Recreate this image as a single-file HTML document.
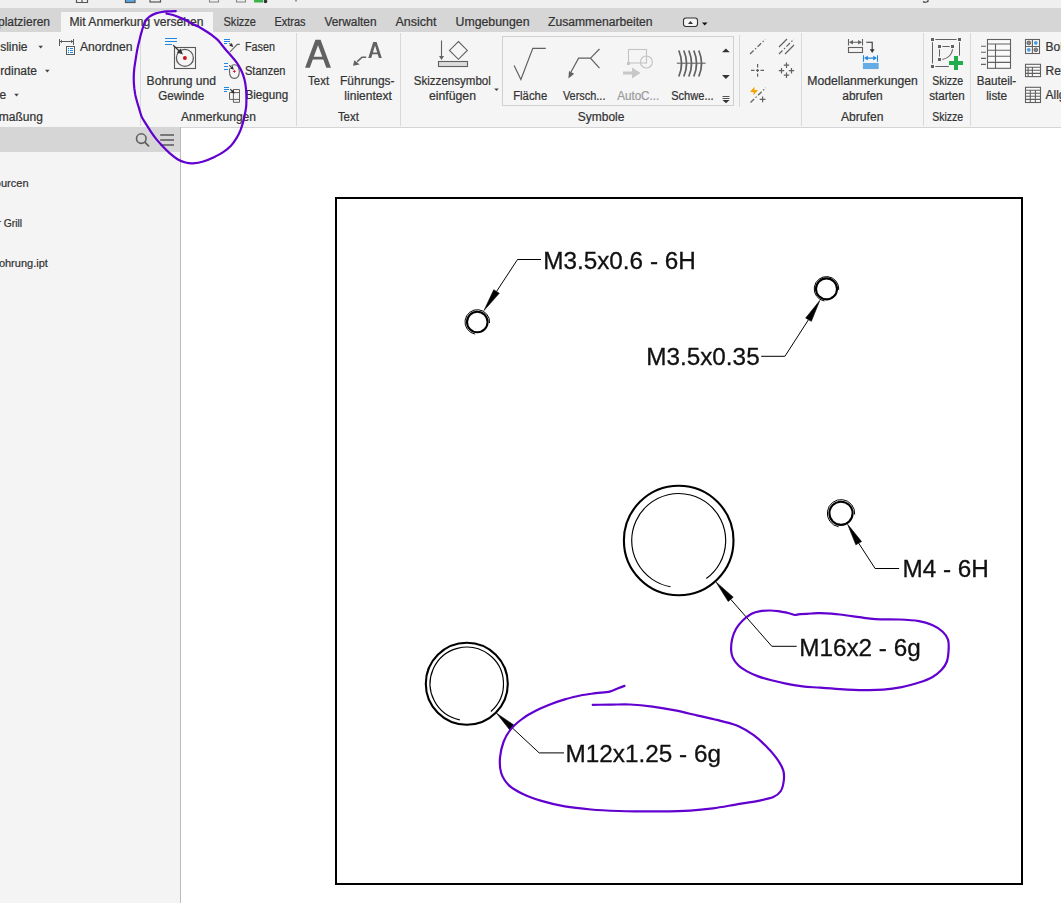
<!DOCTYPE html>
<html><head><meta charset="utf-8"><style>
html,body{margin:0;padding:0;}
body{width:1061px;height:903px;overflow:hidden;background:#fff;font-family:"Liberation Sans",sans-serif;}
svg{display:block;font-family:"Liberation Sans",sans-serif;}
</style></head><body>
<svg width="1061" height="903" viewBox="0 0 1061 903">
<rect x="0" y="0" width="1061" height="8" fill="#efefef"/>
<rect x="0" y="8" width="1061" height="24" fill="#d6d6d6"/>
<rect x="61" y="12" width="152" height="20" fill="#f5f5f5"/>
<rect x="0" y="32" width="1061" height="95" fill="#f5f5f5"/>
<rect x="181" y="127" width="880" height="1" fill="#d5d5d5"/>
<rect x="181" y="128" width="880" height="775" fill="#ffffff"/>
<rect x="0" y="127" width="180" height="25" fill="#d6d6d6"/>
<rect x="0" y="152" width="180" height="751" fill="#f4f4f4"/>
<rect x="180" y="127" width="1" height="776" fill="#bcbcbc"/>
<g fill="none" stroke="#555" stroke-width="1.2">
<path d="M76.5 -2 V2.5 H87.5 V-2 M82 -2 V2.5"/>
<rect x="125.5" y="-4" width="9.5" height="6.5" fill="#5aa7e8"/>
<rect x="150" y="-4" width="10.5" height="6" />
</g>
<g fill="none" stroke="#8a8a8a" stroke-width="1.1">
<rect x="209.5" y="-4" width="9" height="6"/><rect x="236.5" y="-4" width="9" height="6"/>
</g>
<rect x="254" y="-2" width="9" height="4.5" fill="#3bb54a"/>
<circle cx="265.5" cy="1.5" r="1.8" fill="#333"/>
<rect x="295" y="0" width="2" height="1.5" fill="#999"/>
<path d="M923 1.5 Q925 3 928 1.5 V-2" fill="none" stroke="#333" stroke-width="1.1"/>
<text x="50" y="26" font-size="12" text-anchor="end" fill="#333333" stroke="#333333" stroke-width="0.22">platzieren</text>
<text x="69.5" y="26" font-size="12" text-anchor="start" fill="#333333" stroke="#333333" stroke-width="0.22" textLength="134" lengthAdjust="spacingAndGlyphs">Mit Anmerkung versehen</text>
<text x="223.5" y="26" font-size="12" text-anchor="start" fill="#333333" stroke="#333333" stroke-width="0.22" textLength="32.5" lengthAdjust="spacingAndGlyphs">Skizze</text>
<text x="274.5" y="26" font-size="12" text-anchor="start" fill="#333333" stroke="#333333" stroke-width="0.22" textLength="31" lengthAdjust="spacingAndGlyphs">Extras</text>
<text x="324.5" y="26" font-size="12" text-anchor="start" fill="#333333" stroke="#333333" stroke-width="0.22" textLength="52" lengthAdjust="spacingAndGlyphs">Verwalten</text>
<text x="395.5" y="26" font-size="12" text-anchor="start" fill="#333333" stroke="#333333" stroke-width="0.22" textLength="41" lengthAdjust="spacingAndGlyphs">Ansicht</text>
<text x="455.5" y="26" font-size="12" text-anchor="start" fill="#333333" stroke="#333333" stroke-width="0.22" textLength="74" lengthAdjust="spacingAndGlyphs">Umgebungen</text>
<text x="548" y="26" font-size="12" text-anchor="start" fill="#333333" stroke="#333333" stroke-width="0.22" textLength="104.5" lengthAdjust="spacingAndGlyphs">Zusammenarbeiten</text>
<rect x="683.5" y="18" width="14" height="8.5" rx="2.5" fill="#f4f5f7" stroke="#333" stroke-width="1.1"/>
<path d="M688 24 L690.5 21 L693 24 Z" fill="#333"/>
<path d="M702 22.5 H707.5 L704.75 25.5 Z" fill="#111"/>
<text x="27.5" y="50.8" font-size="12" text-anchor="end" fill="#333333" stroke="#333333" stroke-width="0.22">slinie</text>
<path d="M38.4 45.8 H43.0 L40.699999999999996 48.4 Z" fill="#444"/>
<text x="37" y="74.8" font-size="12" text-anchor="end" fill="#333333" stroke="#333333" stroke-width="0.22">rdinate</text>
<path d="M45 69.8 H49.6 L47.3 72.39999999999999 Z" fill="#444"/>
<text x="6.2" y="98.8" font-size="12" text-anchor="end" fill="#333333" stroke="#333333" stroke-width="0.22">e</text>
<path d="M14.2 93.8 H18.799999999999997 L16.5 96.39999999999999 Z" fill="#444"/>
<text x="42.8" y="120.5" font-size="12" text-anchor="end" fill="#333333" stroke="#333333" stroke-width="0.22">maßung</text>
<g fill="none" stroke="#5a5a5a" stroke-width="1">
<path d="M59.5 39 V46 M73.5 39 V45 M59.5 41.5 H73.5"/>
<rect x="66.5" y="46.5" width="8" height="8" fill="#fff"/>
</g>
<path d="M60 41.5 L62 39.8 V43.2 Z M73 41.5 L71 39.8 V43.2 Z" fill="#5a5a5a"/>
<g fill="#1e88e5"><circle cx="68.5" cy="48.5" r="0.7"/><rect x="70" y="48" width="3" height="1"/><circle cx="68.5" cy="50.5" r="0.7"/><rect x="70" y="50" width="3" height="1"/><circle cx="68.5" cy="52.5" r="0.7"/><rect x="70" y="52" width="3" height="1"/></g>
<text x="80" y="50.8" font-size="12" text-anchor="start" fill="#333333" stroke="#333333" stroke-width="0.22" textLength="52.5" lengthAdjust="spacingAndGlyphs">Anordnen</text>
<rect x="140" y="33" width="1" height="93" fill="#d9d9d9"/>
<g stroke="#1e88e5" stroke-width="1.2"><path d="M165 38.5 H177 M165 41.5 H177 M165 44.5 H172"/></g>
<rect x="174.5" y="47.5" width="21" height="21" fill="none" stroke="#5a5a5a" stroke-width="1.1"/>
<circle cx="184.9" cy="57.9" r="8.5" fill="none" stroke="#5a5a5a" stroke-width="1.3"/>
<circle cx="184.9" cy="58" r="2" fill="#c8161d"/>
<path d="M173.2 45.3 L179.5 51.2" stroke="#333" stroke-width="1.2"/>
<path d="M183 54.5 L176.8 52.6 L180.6 48.6 Z" fill="#333"/>
<text x="181.3" y="84.5" font-size="12" text-anchor="middle" fill="#333333" stroke="#333333" stroke-width="0.22" textLength="69.5" lengthAdjust="spacingAndGlyphs">Bohrung und</text>
<text x="181.3" y="100.2" font-size="12" text-anchor="middle" fill="#333333" stroke="#333333" stroke-width="0.22" textLength="46" lengthAdjust="spacingAndGlyphs">Gewinde</text>
<path d="M224 39.5 H230 M224 41.5 H230 M224 43.5 H227" stroke="#1e88e5" stroke-width="1.05"/>
<path d="M229.4 43.3 L230.59 44.42" stroke="#2e2e2e" stroke-width="1.1"/>
<path d="M233.2 46.9 L229.28 45.80 L231.89 43.04 Z" fill="#2e2e2e"/>
<path d="M230 51.9 L237.3 44.4 H239.8" fill="none" stroke="#616161" stroke-width="1.1"/>
<text x="245" y="50.8" font-size="12" text-anchor="start" fill="#333333" stroke="#333333" stroke-width="0.22" textLength="30" lengthAdjust="spacingAndGlyphs">Fasen</text>
<path d="M224 63.5 H228 M224 66.5 H228 M224 69.5 H228" stroke="#1e88e5" stroke-width="1.05"/>
<path d="M231.5 65.6 Q234.4 63.8 237.3 65.6 Q239.3 67.5 239.3 71.5 Q239.3 78.4 234.4 78.4 Q229.5 78.4 229.5 71.5 V68.5" fill="none" stroke="#616161" stroke-width="1.1"/>
<path d="M229.3 65.3 L231.30 67.21" stroke="#2e2e2e" stroke-width="1.1"/>
<path d="M233.9 69.7 L229.99 68.58 L232.61 65.84 Z" fill="#2e2e2e"/>
<path d="M234.4 69.8 L235.1 70.7 L236 71.4 L235.1 72.1 L234.4 73 L233.7 72.1 L232.8 71.4 L233.7 70.7 Z" fill="#d0141a"/>
<text x="245" y="74.8" font-size="12" text-anchor="start" fill="#333333" stroke="#333333" stroke-width="0.22" textLength="40.5" lengthAdjust="spacingAndGlyphs">Stanzen</text>
<path d="M224 87.5 H229 M224 89.5 H229 M224 91.5 H227" stroke="#1e88e5" stroke-width="1.05"/>
<g fill="none" stroke="#616161" stroke-width="1"><path d="M233.4 89.5 H239.5 V102.3 H233.4 Z M233.4 92.6 H239.5 M233.4 99.4 H239.5 M229.5 92.6 H233.4 M229.5 92.6 V99.4 H233.4"/></g>
<path d="M230.2 89.1 L232.03 90.88" stroke="#2e2e2e" stroke-width="1.1"/>
<path d="M234.6 93.4 L230.70 92.24 L233.35 89.52 Z" fill="#2e2e2e"/>
<text x="245.5" y="98.8" font-size="12" text-anchor="start" fill="#333333" stroke="#333333" stroke-width="0.22" textLength="42.8" lengthAdjust="spacingAndGlyphs">Biegung</text>
<text x="218.5" y="120.5" font-size="12" text-anchor="middle" fill="#333333" stroke="#333333" stroke-width="0.22" textLength="75" lengthAdjust="spacingAndGlyphs">Anmerkungen</text>
<rect x="296" y="33" width="1" height="93" fill="#d9d9d9"/>
<path fill-rule="evenodd" d="M305.1 67.8 L315.4 39.8 H320.6 L331 67.8 H326.3 L323.3 59.5 H312.8 L309.8 67.8 Z M313.8 56.7 H322.3 L318 45.3 Z" fill="#616161"/>
<text x="318.6" y="84.5" font-size="12" text-anchor="middle" fill="#333333" stroke="#333333" stroke-width="0.22" textLength="21" lengthAdjust="spacingAndGlyphs">Text</text>
<path fill-rule="evenodd" d="M368.3 57.9 L373.2 41.9 H376.6 L381.8 57.9 H378.9 L377.7 54.2 H372.4 L371.2 57.9 Z M372.9 52.5 H377.2 L375.05 45.6 Z" fill="#616161"/>
<path d="M366.2 57.2 H362 L357.2 61.6" fill="none" stroke="#616161" stroke-width="1.5"/>
<path d="M353 65.7 L354.4 60.3 L359.6 64.6 Z" fill="#616161"/>
<text x="367.3" y="84.5" font-size="12" text-anchor="middle" fill="#333333" stroke="#333333" stroke-width="0.22" textLength="54.5" lengthAdjust="spacingAndGlyphs">Führungs-</text>
<text x="368.1" y="100.2" font-size="12" text-anchor="middle" fill="#333333" stroke="#333333" stroke-width="0.22" textLength="47.5" lengthAdjust="spacingAndGlyphs">linientext</text>
<text x="348.4" y="120.5" font-size="12" text-anchor="middle" fill="#333333" stroke="#333333" stroke-width="0.22" textLength="21" lengthAdjust="spacingAndGlyphs">Text</text>
<rect x="400" y="33" width="1" height="93" fill="#d9d9d9"/>
<path d="M441.5 40.5 V57" stroke="#616161" stroke-width="1.1"/>
<path d="M439 56 H444 L441.5 60 Z" fill="#616161"/>
<path d="M458.4 41.5 L467.3 50.4 L458.4 59.3 L449.5 50.4 Z" fill="none" stroke="#616161" stroke-width="1.1"/>
<rect x="438.5" y="61.5" width="29" height="5" fill="#dcdcdc" stroke="#616161" stroke-width="1.1"/>
<text x="452.3" y="84.5" font-size="12" text-anchor="middle" fill="#333333" stroke="#333333" stroke-width="0.22" textLength="77" lengthAdjust="spacingAndGlyphs">Skizzensymbol</text>
<text x="452.5" y="100.2" font-size="12" text-anchor="middle" fill="#333333" stroke="#333333" stroke-width="0.22" textLength="47" lengthAdjust="spacingAndGlyphs">einfügen</text>
<path d="M494.2 88.4 H498.8 L496.5 91.0 Z" fill="#444"/>
<rect x="502.5" y="36.5" width="231" height="69" fill="none" stroke="#cfcfcf" stroke-width="1"/>
<path d="M514.1 65.4 L520.9 79.5 L532.8 48.4 H545.8" fill="none" stroke="#616161" stroke-width="1.2"/>
<text x="530.2" y="100.2" font-size="12" text-anchor="middle" fill="#333333" stroke="#333333" stroke-width="0.22" textLength="34" lengthAdjust="spacingAndGlyphs">Fläche</text>
<path d="M599.5 49 L590.5 58.2 L599.5 68.2 M590.5 58.2 H578.6 L571 72" fill="none" stroke="#616161" stroke-width="1.2"/>
<path d="M568.4 78.4 L569 71 L574.2 73.8 Z" fill="#616161"/>
<text x="584.2" y="100.2" font-size="12" text-anchor="middle" fill="#333333" stroke="#333333" stroke-width="0.22" textLength="42.5" lengthAdjust="spacingAndGlyphs">Versch...</text>
<g fill="none" stroke="#c4c4c4" stroke-width="1.1"><rect x="628.5" y="49.5" width="18" height="13.5"/><circle cx="646.4" cy="62" r="6"/></g>
<rect x="627" y="62" width="3" height="3" fill="#c4c4c4"/>
<path d="M623 71.5 H632 V67.5 L640.6 73 L632 78.6 V74.6 H623 Z" fill="#c8c8c8"/>
<text x="638.2" y="100.2" font-size="12" text-anchor="middle" fill="#9a9a9a" stroke="#9a9a9a" stroke-width="0.22" textLength="42" lengthAdjust="spacingAndGlyphs">AutoC...</text>
<g fill="none" stroke="#616161" stroke-width="1.7">
<path d="M678.8 50.5 Q684.3 63.5 678.8 76.5"/>
<path d="M683.8 50.5 Q689.3 63.5 683.8 76.5"/>
<path d="M688.8 50.5 Q694.3 63.5 688.8 76.5"/>
<path d="M693.8 50.5 Q699.3 63.5 693.8 76.5"/>
<path d="M698.8 50.5 Q704.3 63.5 698.8 76.5"/>
</g>
<path d="M676.8 63.2 H705.6" stroke="#616161" stroke-width="1.1"/>
<text x="692.4" y="100.2" font-size="12" text-anchor="middle" fill="#333333" stroke="#333333" stroke-width="0.22" textLength="42.5" lengthAdjust="spacingAndGlyphs">Schwe...</text>
<path d="M722 52.2 H729.8 L725.9 48.5 Z M722 74.9 H729.8 L725.9 79 Z" fill="#333"/>
<rect x="722.5" y="96" width="7" height="1" fill="#555"/><rect x="722.5" y="98" width="7" height="1" fill="#555"/><path d="M722.5 100 H729.5 L726 103.2 Z" fill="#333"/>
<text x="601.1" y="120.5" font-size="12" text-anchor="middle" fill="#333333" stroke="#333333" stroke-width="0.22" textLength="46.5" lengthAdjust="spacingAndGlyphs">Symbole</text>
<rect x="739" y="35" width="1" height="72" fill="#d9d9d9"/>
<g fill="none" stroke="#616161" stroke-width="1.2">
<path d="M750 54 L765.3 39.3" stroke-dasharray="5 2 1.5 2"/>
<path d="M779 47 L787 39 M785 54 L794 45"/>
<path d="M779 54 L794 39" stroke-dasharray="5 2 1.5 2"/>
<path d="M751 70.4 H764.2 M757.6 64 V76.7" stroke-dasharray="3.5 1.5 3 1.5"/>
<path d="M786.5 62.5 V68 M783.8 65.2 H789.2 M781.5 68 V73.5 M778.8 70.7 H784.2 M791.5 68 V73.5 M788.8 70.7 H794.2 M786.5 72.5 V78 M783.8 75.2 H789.2"/>
<path d="M750.5 102.5 L765.8 87.8" stroke-dasharray="5 2 1.5 2"/>
<path d="M762.6 96.5 V102.3 M759.7 99.4 H765.5"/>
</g>
<path d="M750 92 L754.5 86.7 L754.5 90 L758 90 L753.5 95.2 L753.5 92 Z" fill="#f5a300"/>
<rect x="801" y="33" width="1" height="93" fill="#d9d9d9"/>
<g fill="none" stroke="#616161" stroke-width="1.1"><path d="M848.5 39 V45.5 M862.5 39 V45.5 M851 42.2 H860"/><rect x="848.5" y="47.5" width="14" height="5"/></g>
<path d="M849 42.2 L852.9 39.9 V44.5 Z M862 42.2 L858.1 39.9 V44.5 Z" fill="#616161"/>
<path d="M866.3 42.2 H872.2 V50" fill="none" stroke="#333" stroke-width="1.1"/><path d="M869.8 49.2 H874.6 L872.2 52.9 Z" fill="#333"/>
<g fill="none" stroke="#1e88e5" stroke-width="1.1"><path d="M863.5 55.2 V61.8 M877.5 55.2 V61.8 M866 58.1 H875"/></g>
<path d="M864 58.1 L867.8 55.8 V60.4 Z M877 58.1 L873.2 55.8 V60.4 Z" fill="#1e88e5"/>
<rect x="863.2" y="63.2" width="15" height="5.6" fill="#62ade6" stroke="#4d9bd8" stroke-width="0.5"/>
<text x="862.6" y="84.5" font-size="12" text-anchor="middle" fill="#333333" stroke="#333333" stroke-width="0.22" textLength="110.5" lengthAdjust="spacingAndGlyphs">Modellanmerkungen</text>
<text x="862.5" y="100.2" font-size="12" text-anchor="middle" fill="#333333" stroke="#333333" stroke-width="0.22" textLength="40.5" lengthAdjust="spacingAndGlyphs">abrufen</text>
<text x="862.2" y="120.5" font-size="12" text-anchor="middle" fill="#333333" stroke="#333333" stroke-width="0.22" textLength="42.5" lengthAdjust="spacingAndGlyphs">Abrufen</text>
<rect x="923" y="33" width="1" height="93" fill="#d9d9d9"/>
<g fill="none" stroke="#616161" stroke-width="1"><path d="M935.3 39.5 H956.6 M932.5 42.2 V63.5 M959.5 42.2 V55.7 M935.3 66.5 H948.8 M942.4 46.5 H949.7 M939.5 49.3 V56.6"/><path d="M952.6 49.3 Q951.5 57.5 942.4 59.5" stroke-width="1.1"/></g>
<g fill="#616161"><rect x="931" y="38" width="3" height="3"/><rect x="958" y="38" width="3" height="3"/><rect x="931" y="65" width="3" height="3"/><rect x="938" y="45" width="3" height="3"/><rect x="951" y="45" width="3" height="3"/><rect x="938" y="58" width="3" height="3"/></g>
<path d="M954 56 H958 V61 H963 V65 H958 V70 H954 V65 H949 V61 H954 Z" fill="#22ad4c"/>
<text x="947.7" y="84.5" font-size="12" text-anchor="middle" fill="#333333" stroke="#333333" stroke-width="0.22" textLength="31" lengthAdjust="spacingAndGlyphs">Skizze</text>
<text x="946.9" y="100.2" font-size="12" text-anchor="middle" fill="#333333" stroke="#333333" stroke-width="0.22" textLength="35.5" lengthAdjust="spacingAndGlyphs">starten</text>
<text x="947.7" y="120.5" font-size="12" text-anchor="middle" fill="#333333" stroke="#333333" stroke-width="0.22" textLength="31" lengthAdjust="spacingAndGlyphs">Skizze</text>
<rect x="970" y="33" width="1" height="93" fill="#d9d9d9"/>
<g fill="none" stroke="#616161" stroke-width="1.1"><rect x="987.5" y="39.5" width="23" height="28.8" fill="#fafafa"/><path d="M987.5 44 H1010.5 M987.5 50.2 H1010.5 M987.5 56.3 H1010.5 M987.5 62.4 H1010.5 M995.5 44 V68.3 M981 46.3 H985.9 M981 52.3 H985.9 M981 58.4 H985.9 M981 64.4 H985.9"/></g>
<text x="996.5" y="84.5" font-size="12" text-anchor="middle" fill="#333333" stroke="#333333" stroke-width="0.22" textLength="39.5" lengthAdjust="spacingAndGlyphs">Bauteil-</text>
<text x="996.7" y="100.2" font-size="12" text-anchor="middle" fill="#333333" stroke="#333333" stroke-width="0.22" textLength="21" lengthAdjust="spacingAndGlyphs">liste</text>
<g fill="none" stroke="#616161" stroke-width="1.1"><rect x="1025.5" y="39.5" width="14" height="14" fill="#fafafa"/><path d="M1032.4 39.5 V53.5 M1025.5 46.5 H1039.5"/><rect x="1025.5" y="64.3" width="15" height="12.3" fill="#fafafa"/><path d="M1025.5 67.3 H1040.5 M1025.5 70.3 H1040.5 M1025.5 73.4 H1040.5 M1028.1 67.3 V76.6 M1032.4 67.3 V76.6"/><rect x="1025.5" y="87.3" width="15" height="15.2" fill="#fafafa"/><path d="M1025.5 90.2 H1040.5 M1025.5 93.3 H1040.5 M1025.5 96.3 H1040.5 M1025.5 99.4 H1040.5 M1030.3 90.2 V102.5 M1035.4 90.2 V102.5"/></g>
<g stroke="#555" stroke-width="0.8"><circle cx="1028.8" cy="42.9" r="1.9" fill="#888"/><circle cx="1028.8" cy="49.8" r="1.9" fill="#4a9de0" stroke="none"/><circle cx="1035.8" cy="42.9" r="1.9" fill="#4a9de0" stroke="none"/><circle cx="1035.8" cy="49.8" r="1.9" fill="#888"/></g>
<text x="1045.5" y="50.8" font-size="12" text-anchor="start" fill="#333333" stroke="#333333" stroke-width="0.22">Bohrungstabelle</text>
<text x="1045.5" y="74.8" font-size="12" text-anchor="start" fill="#333333" stroke="#333333" stroke-width="0.22">Revisionstabelle</text>
<text x="1045.5" y="98.8" font-size="12" text-anchor="start" fill="#333333" stroke="#333333" stroke-width="0.22">Allgemeine Tabelle</text>
<circle cx="141.3" cy="138.6" r="4.8" fill="none" stroke="#5f5f5f" stroke-width="1.6"/>
<path d="M144.8 142.2 L149 146.4" stroke="#5f5f5f" stroke-width="1.8"/>
<path d="M160.2 135 H174 M160.2 140 H174 M160.2 145 H174" stroke="#595959" stroke-width="1.7"/>
<text x="28.5" y="187" font-size="11" text-anchor="end" fill="#333" stroke="#333" stroke-width="0.22">ourcen</text>
<text x="-2.6" y="227" font-size="11" text-anchor="start" fill="#333" stroke="#333" stroke-width="0.22" textLength="24.7" lengthAdjust="spacingAndGlyphs">r Grill</text>
<text x="47.8" y="267" font-size="11" text-anchor="end" fill="#333" stroke="#333" stroke-width="0.22">ohrung.ipt</text>
<rect x="336" y="198" width="686" height="686" fill="none" stroke="#000" stroke-width="2"/>
<circle cx="477.3" cy="322" r="10.3" fill="none" stroke="#000" stroke-width="2.1"/>
<path d="M475.16 334.11 A12.3 12.3 0 1 1 489.55 323.07" fill="none" stroke="#000" stroke-width="1.0"/>
<circle cx="826.5" cy="288.9" r="10.5" fill="none" stroke="#000" stroke-width="2.1"/>
<path d="M824.36 301.01 A12.3 12.3 0 1 1 838.75 289.97" fill="none" stroke="#000" stroke-width="1.0"/>
<circle cx="841" cy="513.3" r="11.6" fill="none" stroke="#000" stroke-width="2.1"/>
<path d="M838.62 526.79 A13.7 13.7 0 1 1 854.65 514.49" fill="none" stroke="#000" stroke-width="1.0"/>
<circle cx="678.7" cy="540.5" r="54.8" fill="none" stroke="#000" stroke-width="2.1"/>
<path d="M670.54 586.79 A47 47 0 1 1 706.33 578.52" fill="none" stroke="#000" stroke-width="1.15"/>
<circle cx="466.8" cy="683.8" r="41" fill="none" stroke="#000" stroke-width="2.1"/>
<path d="M459.80 719.83 A36.7 36.7 0 1 1 490.88 711.50" fill="none" stroke="#000" stroke-width="1.15"/>
<path d="M484 310.5 L499.26 293.31 L493.74 289.69 Z" fill="#000" stroke="#000" stroke-width="0.6" stroke-linejoin="round"/>
<path d="M496.5 291.5 L517.5 259.5 L541 259.5" fill="none" stroke="#000" stroke-width="1"/>
<path d="M819.8 300.4 L805.65 318.03 L811.35 321.37 Z" fill="#000" stroke="#000" stroke-width="0.6" stroke-linejoin="round"/>
<path d="M808.5 319.7 L784.9 356.3 L761.2 356.3" fill="none" stroke="#000" stroke-width="1"/>
<path d="M847.6 524.3 L855.85 544.87 L861.55 541.53 Z" fill="#000" stroke="#000" stroke-width="0.6" stroke-linejoin="round"/>
<path d="M858.7 543.2 L875.1 568.5 L899.1 568.5" fill="none" stroke="#000" stroke-width="1"/>
<path d="M716 582 L728.19 601.44 L733.21 597.16 Z" fill="#000" stroke="#000" stroke-width="0.6" stroke-linejoin="round"/>
<path d="M730.7 599.3 L771.8 646.3 L796.7 646.3" fill="none" stroke="#000" stroke-width="1"/>
<path d="M496.6 713.3 L510.05 730.32 L514.55 725.48 Z" fill="#000" stroke="#000" stroke-width="0.6" stroke-linejoin="round"/>
<path d="M512.3 727.9 L539.2 752.9 L564 752.9" fill="none" stroke="#000" stroke-width="1"/>
<g style="filter:contrast(1)" stroke="#111" stroke-width="0.3">
<text x="543.2" y="268.5" font-size="24.3" text-anchor="start" fill="#111">M3.5x0.6 - 6H</text>
<text x="646.2" y="364.5" font-size="24.3" text-anchor="start" fill="#111">M3.5x0.35</text>
<text x="902.4" y="577" font-size="24.3" text-anchor="start" fill="#111">M4 - 6H</text>
<text x="799.2" y="655.8" font-size="24.3" text-anchor="start" fill="#111">M16x2 - 6g</text>
<text x="565.6" y="762.3" font-size="24.3" text-anchor="start" fill="#111">M12x1.25 - 6g</text>
</g>
<path d="M175.8 11.1 C174.8 11.1 172.2 11.2 169.9 11.3 C167.6 11.5 164.4 11.6 161.9 12.0 C159.4 12.4 157.2 12.9 155.2 13.6 C153.2 14.3 151.4 15.2 149.9 16.3 C148.4 17.4 147.0 18.6 145.9 20.3 C144.8 22.0 144.1 24.2 143.3 26.3 C142.5 28.4 142.0 30.5 141.3 32.9 C140.6 35.3 140.0 38.1 139.3 40.9 C138.6 43.7 138.0 46.0 137.3 49.5 C136.6 53.0 135.8 58.5 135.3 61.6 C134.8 64.7 134.6 66.1 134.3 68.3 C134.1 70.5 133.9 72.7 133.8 74.9 C133.7 77.1 133.7 79.4 133.8 81.6 C133.9 83.8 134.1 86.0 134.3 88.2 C134.6 90.4 134.9 92.7 135.3 94.9 C135.8 97.1 136.4 99.3 137.0 101.5 C137.6 103.7 138.2 105.7 139.0 108.2 C139.8 110.7 140.5 114.1 141.6 116.6 C142.7 119.1 144.0 120.8 145.6 123.3 C147.2 125.8 149.1 129.1 151.0 131.9 C152.9 134.7 154.9 137.5 156.9 139.9 C158.9 142.3 160.8 144.3 162.9 146.5 C165.0 148.7 167.2 151.1 169.6 153.2 C172.0 155.3 174.8 157.6 177.5 159.2 C180.2 160.8 182.9 161.8 185.5 162.5 C188.1 163.2 190.0 163.5 193.0 163.3 C196.0 163.1 199.9 162.5 203.3 161.5 C206.7 160.5 210.0 159.1 213.3 157.5 C216.6 155.9 220.2 154.2 223.2 152.2 C226.2 150.2 229.0 147.8 231.2 145.5 C233.4 143.2 234.9 140.8 236.5 138.2 C238.1 135.6 239.4 133.0 240.5 130.2 C241.6 127.4 242.4 124.5 243.2 121.6 C244.0 118.7 244.6 115.8 245.1 113.0 C245.6 110.2 246.1 108.6 246.3 105.0 C246.5 101.4 246.4 95.2 246.2 91.5 C246.0 87.8 245.6 85.5 245.2 82.9 C244.8 80.4 244.2 78.4 243.5 76.2 C242.8 74.0 241.9 71.8 240.8 69.6 C239.7 67.4 238.5 65.1 236.9 62.9 C235.3 60.7 233.3 58.4 231.5 56.3 C229.7 54.2 227.7 52.0 226.2 50.3 C224.7 48.5 223.9 47.5 222.5 45.8 C221.1 44.1 219.5 41.7 217.7 39.9 C215.9 38.1 213.7 36.5 211.6 34.9 C209.5 33.3 207.1 31.9 204.9 30.5 C202.7 29.1 200.6 27.8 198.3 26.6 C196.0 25.4 193.2 24.4 191.1 23.3 C189.0 22.2 187.4 20.9 185.5 20.0 C183.6 19.1 181.9 18.4 179.8 17.6 C177.8 16.8 175.4 15.7 173.2 15.0 C171.0 14.3 167.6 13.8 166.5 13.6" fill="none" stroke="#6200d0" stroke-width="2.2" stroke-linecap="round" stroke-linejoin="round"/>
<path d="M794.8 615.0 C793.5 614.6 789.8 613.4 787.0 612.7 C784.2 612.1 781.2 611.5 778.2 611.1 C775.2 610.7 772.3 610.5 769.3 610.5 C766.3 610.5 763.3 610.6 760.4 611.1 C757.5 611.6 754.5 612.2 751.6 613.8 C748.7 615.4 745.3 618.0 742.7 620.5 C740.1 623.0 737.9 625.8 736.1 628.8 C734.4 631.8 733.0 635.3 732.2 638.8 C731.4 642.3 731.0 646.7 731.1 649.8 C731.2 652.9 731.6 655.0 732.8 657.6 C734.0 660.2 735.9 663.0 738.3 665.3 C740.7 667.6 743.8 669.5 747.1 671.4 C750.4 673.2 754.1 674.9 758.2 676.4 C762.3 677.9 766.9 679.1 771.5 680.3 C776.1 681.5 780.7 682.6 785.9 683.6 C791.1 684.6 796.8 685.7 802.5 686.4 C808.2 687.1 813.8 687.2 820.0 687.7 C826.2 688.2 832.5 688.7 839.8 689.1 C847.0 689.5 856.2 690.0 863.5 690.1 C870.8 690.2 876.9 690.2 883.3 689.7 C889.7 689.2 895.8 688.3 901.8 687.1 C907.8 685.9 913.9 684.1 919.0 682.5 C924.1 680.9 928.5 679.3 932.2 677.2 C935.9 675.1 939.0 672.4 941.4 669.9 C943.8 667.4 945.5 665.3 946.7 662.0 C947.9 658.7 948.4 653.8 948.6 650.1 C948.8 646.4 949.0 642.7 948.0 639.6 C947.0 636.5 945.3 634.1 942.7 631.7 C940.1 629.3 936.2 626.9 932.2 625.1 C928.2 623.3 924.5 622.0 919.0 621.1 C913.5 620.2 906.5 619.8 899.2 619.5 C891.9 619.2 882.0 619.5 875.4 619.1 C868.8 618.7 865.5 618.0 859.6 617.2 C853.7 616.4 846.4 615.2 839.8 614.5 C833.2 613.8 824.7 613.4 820.0 613.2 C815.3 613.0 814.7 613.3 811.4 613.5 C808.1 613.7 803.1 614.0 800.3 614.2 C797.5 614.5 795.7 614.9 794.8 615.0" fill="none" stroke="#6200d0" stroke-width="2.2" stroke-linecap="round" stroke-linejoin="round"/>
<path d="M624.5 685.9 C623.3 686.3 620.0 687.5 617.5 688.5 C615.0 689.5 613.3 690.8 609.7 691.6 C606.1 692.4 600.7 692.6 595.8 693.2 C590.9 693.9 585.5 694.5 580.3 695.5 C575.1 696.5 570.0 697.9 564.8 699.4 C559.6 700.9 554.5 702.7 549.3 704.8 C544.1 706.9 538.4 709.3 533.8 711.8 C529.1 714.2 525.3 716.5 521.4 719.5 C517.5 722.5 513.5 725.9 510.5 729.6 C507.5 733.4 505.2 737.4 503.5 742.0 C501.8 746.6 500.4 752.3 500.0 757.5 C499.6 762.7 499.7 768.4 501.2 773.0 C502.7 777.6 505.4 781.9 509.0 785.4 C512.6 788.9 517.5 791.4 522.9 794.0 C528.3 796.6 534.5 798.8 541.5 800.9 C548.5 803.0 556.5 805.0 564.8 806.4 C573.1 807.8 582.1 808.7 591.1 809.5 C600.1 810.3 610.9 810.7 619.0 811.0 C627.1 811.3 633.1 811.3 640.0 811.4 C646.9 811.5 651.8 811.5 660.2 811.4 C668.6 811.3 681.5 811.1 690.3 810.6 C699.1 810.1 705.3 809.4 712.9 808.4 C720.5 807.4 728.0 805.9 735.6 804.6 C743.2 803.3 751.9 802.0 758.2 800.8 C764.5 799.5 769.5 798.7 773.3 797.1 C777.1 795.5 779.0 793.8 780.8 791.0 C782.5 788.2 783.4 784.0 783.8 780.5 C784.2 777.0 784.4 773.7 783.1 769.9 C781.9 766.1 779.2 761.9 776.3 757.9 C773.4 753.9 769.5 749.6 765.7 745.8 C761.9 742.0 758.2 738.5 753.7 735.2 C749.2 731.9 744.1 728.6 738.6 726.2 C733.1 723.8 727.3 722.7 720.5 720.9 C713.7 719.1 705.4 717.4 697.9 715.6 C690.4 713.9 682.8 711.9 675.2 710.4 C667.7 708.9 660.1 707.6 652.6 706.6 C645.1 705.6 636.9 704.8 630.0 704.5 C623.1 704.2 617.2 704.6 611.0 704.6 C604.8 704.6 595.8 704.8 592.7 704.8" fill="none" stroke="#6200d0" stroke-width="2.2" stroke-linecap="round" stroke-linejoin="round"/>
</svg>
</body></html>
